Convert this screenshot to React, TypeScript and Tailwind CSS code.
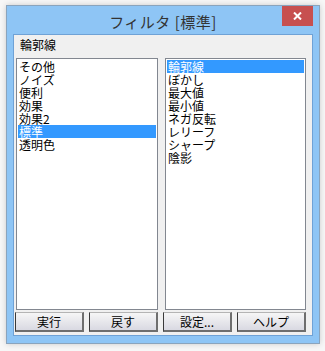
const leftItems = ['その他', 'ノイズ', '便利', '効果', '効果2', '標準', '透明色'];
const rightItems = ['輪郭線', 'ぼかし', '最大値', '最小値', 'ネガ反転', 'レリーフ', 'シャープ', '陰影'];

const jp = { fontFamily: '"Noto Sans CJK JP", "Noto Sans", sans-serif' };

function ListBox({ items, selected, width }: { items: string[]; selected: number; width: string }) {
  return (
    <div className={`${width} h-[252px] bg-white border border-[#828790] p-px`}>
      {items.map((item, i) => (
        <div
          key={item}
          className={`h-[13px] pl-[1px] text-[12px] leading-[13px] ${
            i === selected ? 'bg-[#3399ff] text-white' : 'text-black'
          }`}
        >
          {item}
        </div>
      ))}
    </div>
  );
}

function Button({ label }: { label: string }) {
  return (
    <button className="w-[69px] h-[20px] border-l border-t border-l-[#3a3a3a] border-t-[#b4b4b4] border-r-2 border-b-2 border-r-[#6e6e6e] border-b-[#6e6e6e] bg-gradient-to-b from-[#f6f6f6] to-[#d9d9e2] text-[12px] leading-[16px] text-black">
      {label}
    </button>
  );
}

export default function App() {
  return (
    <div className="w-[325px] h-[351px] bg-[#f7f7f7] pt-[5px] pl-[6px]" style={jp}>
      <div className="w-[314px] h-[339px] border border-[#8aa4bd] bg-[#8ec5f5] shadow-[0_0_6px_rgba(0,0,0,0.18)] flex flex-col">
        <div className="relative h-[28px] flex items-center justify-center">
          <span className="text-[15px] text-[#333] tracking-[0.5px] pt-[5px]">フィルタ [標準]</span>
          <div className="absolute right-[6px] top-0 w-[31px] h-[20px] bg-[#c75050] flex items-center justify-center">
            <svg width="9" height="8" viewBox="0 0 9 8">
              <path d="M1 0.5 L8 7.5 M8 0.5 L1 7.5" stroke="white" strokeWidth="2" />
            </svg>
          </div>
        </div>
        <div className="mx-[6px] h-[302px] border border-[#6fa2d6] bg-[#f0f0f0] flex flex-col">
          <div className="h-[23px] pl-[6px] pt-[2px] text-[12px] leading-[16px] text-black">輪郭線</div>
          <div className="flex gap-[7px] pl-[2px]">
            <ListBox items={leftItems} selected={5} width="w-[142px]" />
            <ListBox items={rightItems} selected={0} width="w-[141px]" />
          </div>
          <div className="flex gap-[5px] pl-[1px] pt-[2px]">
            <Button label="実行" />
            <Button label="戻す" />
            <Button label="設定..." />
            <Button label="ヘルプ" />
          </div>
        </div>
      </div>
    </div>
  );
}
